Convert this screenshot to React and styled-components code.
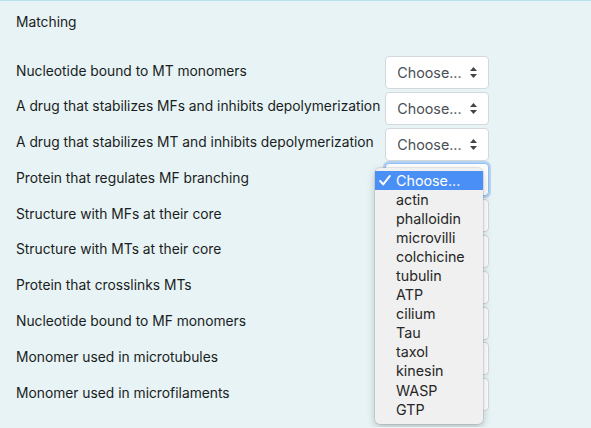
import styled, { createGlobalStyle } from "styled-components";

const Global = createGlobalStyle`
  html, body {
    margin: 0;
    padding: 0;
    background: #e7f3f5;
  }
  body {
    font-family: Inter, "Liberation Sans", sans-serif;
    font-size: 13.8px;
    color: #1a1d21;
  }
`;

const Panel = styled.div`
  position: relative;
  background: #e7f3f5;
  border-top: 1px solid #b8e3ec;
  padding: 11px 16px 0 16px;
  min-height: 427px;
  box-sizing: border-box;
`;

const Title = styled.div`
  line-height: 21px;
  margin-bottom: 23px;
`;

const Table = styled.div`
  display: grid;
  grid-template-columns: max-content max-content;
  column-gap: 5px;
  row-gap: 2.8px;
  align-items: center;
`;

const Label = styled.div`
  line-height: 20px;
  margin-top: -4px;
`;

const Select = styled.div`
  width: 104px;
  height: 33px;
  box-sizing: border-box;
  display: flex;
  align-items: center;
  justify-content: space-between;
  padding: 0 11px 0 11px;
  background: #fff;
  border: 1px solid ${(p) => (p.$focused ? "#8fc1f5" : "#d3d8dc")};
  border-radius: 4px;
  color: #495057;
  font-size: 14.3px;
  box-shadow: ${(p) => (p.$focused ? "0 0 0 2px rgba(120,170,240,0.45)" : "none")};
`;

const Menu = styled.div`
  position: absolute;
  left: 375px;
  top: 167px;
  width: 108px;
  padding: 3px 0 5px 0;
  background: #f0f0f0;
  border-radius: 5px;
  box-shadow: 0 0 0 1px rgba(0, 0, 0, 0.08), 0 3px 9px rgba(0, 0, 0, 0.22);
`;

const Option = styled.div`
  display: flex;
  align-items: center;
  height: 19.05px;
  padding-left: 21px;
  font-size: 14.3px;
  color: ${(p) => (p.$active ? "#fff" : "#262626")};
  background: ${(p) => (p.$active ? "#4a8ff5" : "transparent")};
  position: relative;

  svg {
    position: absolute;
    left: 4px;
    top: 4px;
  }
`;

const labels = [
  "Nucleotide bound to MT monomers",
  "A drug that stabilizes MFs and inhibits depolymerization",
  "A drug that stabilizes MT and inhibits depolymerization",
  "Protein that regulates MF branching",
  "Structure with MFs at their core",
  "Structure with MTs at their core",
  "Protein that crosslinks MTs",
  "Nucleotide bound to MF monomers",
  "Monomer used in microtubules",
  "Monomer used in microfilaments",
];

const options = [
  "actin",
  "phalloidin",
  "microvilli",
  "colchicine",
  "tubulin",
  "ATP",
  "cilium",
  "Tau",
  "taxol",
  "kinesin",
  "WASP",
  "GTP",
];

const Arrows = () => (
  <svg width="7" height="11" viewBox="0 0 7 11">
    <path d="M3.5 0 L7 4 L0 4 Z M3.5 11 L7 7 L0 7 Z" fill="#444" />
  </svg>
);

const CheckMark = () => (
  <svg width="12" height="11" viewBox="0 0 12 11">
    <path
      d="M1.2 6 L4.2 9.4 L10.8 1"
      fill="none"
      stroke="#fff"
      strokeWidth="2"
      strokeLinecap="round"
      strokeLinejoin="round"
    />
  </svg>
);

export default function App() {
  return (
    <>
      <Global />
      <Panel>
        <Title>Matching</Title>
        <Table>
          {labels.map((l, i) => [
            <Label key={"l" + i}>{l}</Label>,
            <Select key={"s" + i} $focused={i === 3}>
              <span>Choose...</span>
              <Arrows />
            </Select>,
          ])}
        </Table>
        <Menu>
          <Option $active>
            <CheckMark />
            Choose...
          </Option>
          {options.map((o) => (
            <Option key={o}>{o}</Option>
          ))}
        </Menu>
      </Panel>
    </>
  );
}
